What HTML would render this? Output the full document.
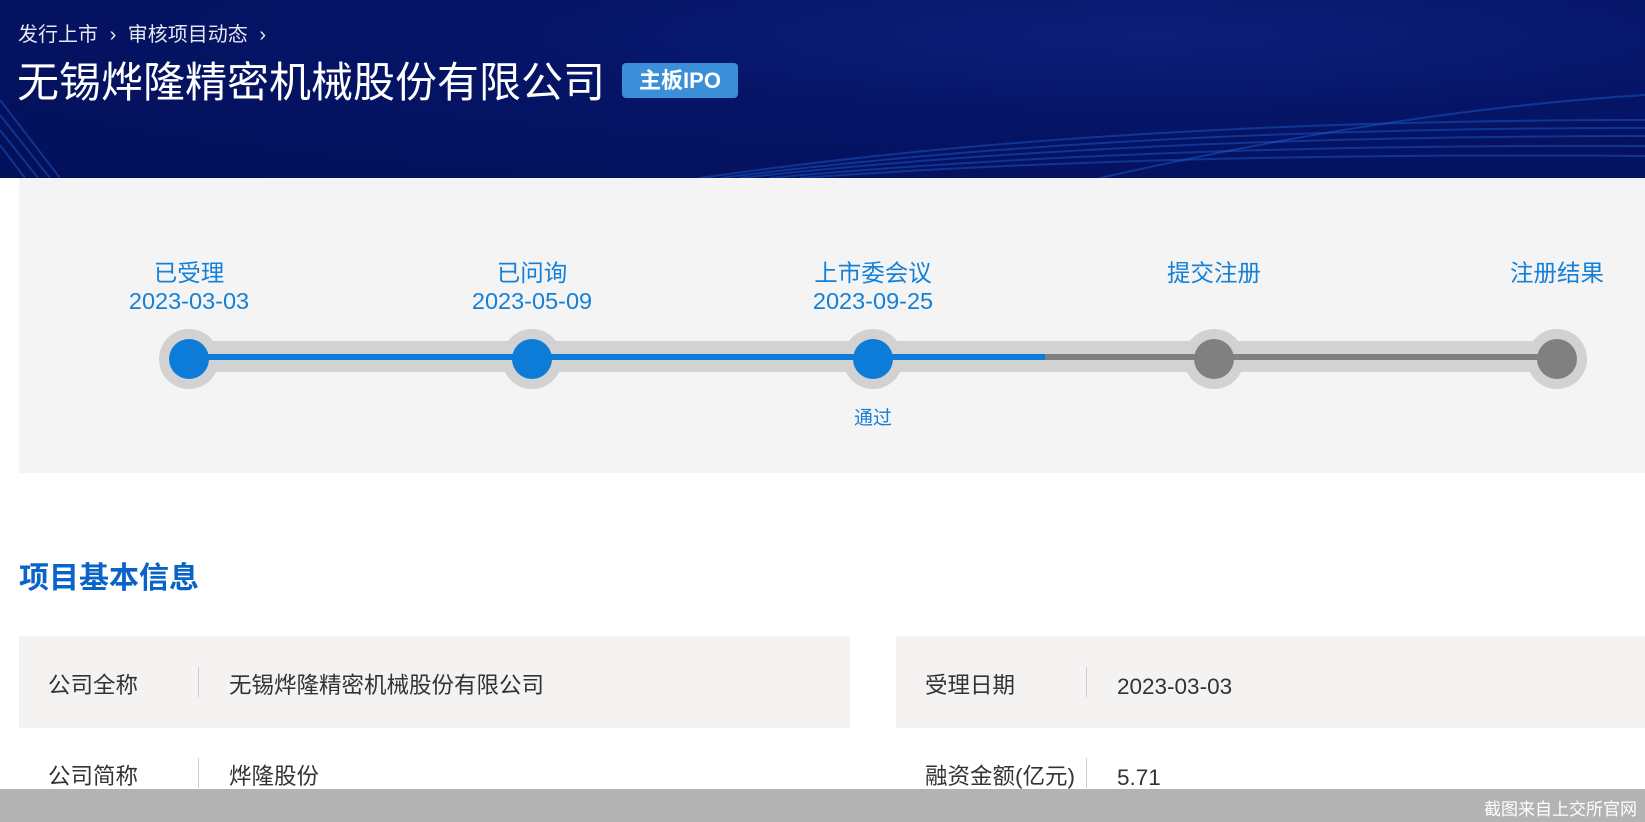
<!DOCTYPE html>
<html><head><meta charset="utf-8"><style>
*{margin:0;padding:0;box-sizing:border-box}
body{width:1645px;height:822px;overflow:hidden;background:#fff;font-family:"Liberation Sans","Noto Sans CJK SC",sans-serif;position:relative}
.hdr{position:absolute;left:0;top:0;width:1645px;height:178px;background:radial-gradient(ellipse at 70% 20%,#0c1f7a 0%,#051466 40%,#03105a 100%);overflow:hidden}
.t{position:absolute;white-space:nowrap}
.panel{position:absolute;left:19px;top:178px;width:1626px;height:295px;background:#f4f4f4}
.track{position:absolute;left:189px;top:341px;width:1368px;height:31px;background:#d2d2d2}
.line{position:absolute;top:354px;height:6px}
.c{position:absolute;width:60px;height:60px;border-radius:50%;background:#d2d2d2;top:329px}
.i{position:absolute;width:40px;height:40px;border-radius:50%;top:339px}
.lb{position:absolute;color:#1580d8;font-size:23.5px;text-align:center;width:200px;line-height:28px}
.row{position:absolute;height:92px;background:#f4f3f2}
.k{position:absolute;font-size:22.5px;color:#333;line-height:30px}
.sep{position:absolute;width:1px;height:30px;background:#ccc}
</style></head><body>
<div class="hdr">
<svg width="1645" height="178" style="position:absolute;left:0;top:0">
<g fill="none" stroke="#1f5fd0" stroke-opacity=".45" stroke-width="2">
<path d="M700 178 Q1100 120 1645 120"/><path d="M720 178 Q1110 128 1645 128"/><path d="M740 178 Q1120 136 1645 136"/><path d="M770 178 Q1140 144 1645 146"/><path d="M800 178 Q1160 152 1645 156"/><path d="M1100 178 Q1400 110 1645 95"/>
<path d="M0 100 L60 178"/><path d="M0 115 L50 178"/><path d="M0 130 L38 178"/><path d="M0 145 L25 178"/>
</g></svg>
<div class="t" style="left:18px;top:18px;font-size:20px;color:#e6e8f2">发行上市 <span style="margin:0 6px">›</span> 审核项目动态 <span style="margin-left:6px">›</span></div>
<div class="t" style="left:17px;top:58px;font-size:42px;color:#fff;line-height:50px">无锡烨隆精密机械股份有限公司</div>
<div class="t" style="left:622px;top:63px;width:116px;height:35px;background:#3a8fd8;border-radius:4px;color:#fff;font-size:22px;font-weight:bold;line-height:35px;text-align:center">主板IPO</div>
</div>
<div class="panel"></div>
<div class="track"></div>
<div class="c" style="left:159px"></div>
<div class="c" style="left:502px"></div>
<div class="c" style="left:843px"></div>
<div class="c" style="left:1184px"></div>
<div class="c" style="left:1527px"></div>
<div class="line" style="left:189px;width:856px;background:#0c7cd8"></div>
<div class="line" style="left:1045px;width:512px;background:#808080"></div>
<div class="i" style="left:169px;background:#0c7cd8"></div>
<div class="i" style="left:512px;background:#0c7cd8"></div>
<div class="i" style="left:853px;background:#0c7cd8"></div>
<div class="i" style="left:1194px;background:#808080"></div>
<div class="i" style="left:1537px;background:#808080"></div>
<div class="lb" style="left:89px;top:259px">已受理<br>2023-03-03</div>
<div class="lb" style="left:432px;top:259px">已问询<br>2023-05-09</div>
<div class="lb" style="left:773px;top:259px">上市委会议<br>2023-09-25</div>
<div class="lb" style="left:1114px;top:259px">提交注册</div>
<div class="lb" style="left:1457px;top:259px">注册结果</div>
<div class="lb" style="left:773px;top:405px;font-size:19px">通过</div>
<div class="t" style="left:19px;top:553px;font-size:30px;font-weight:bold;color:#0a63c8">项目基本信息</div>
<div class="row" style="left:19px;top:636px;width:831px"></div>
<div class="row" style="left:896px;top:636px;width:749px"></div>
<div class="k" style="left:48px;top:671px">公司全称</div>
<div class="sep" style="left:198px;top:667px"></div>
<div class="k" style="left:229px;top:671px">无锡烨隆精密机械股份有限公司</div>
<div class="k" style="left:925px;top:671px">受理日期</div>
<div class="sep" style="left:1086px;top:667px"></div>
<div class="k" style="left:1117px;top:672px">2023-03-03</div>
<div class="k" style="left:48px;top:762px">公司简称</div>
<div class="sep" style="left:198px;top:758px"></div>
<div class="k" style="left:229px;top:762px">烨隆股份</div>
<div class="k" style="left:925px;top:762px">融资金额(亿元)</div>
<div class="sep" style="left:1086px;top:758px"></div>
<div class="k" style="left:1117px;top:763px">5.71</div>
<div style="position:absolute;left:0;top:789px;width:1645px;height:33px;background:#b3b3b3"></div>
<div class="t" style="right:8px;top:795px;font-size:17px;color:#fff">截图来自上交所官网</div>
</body></html>
